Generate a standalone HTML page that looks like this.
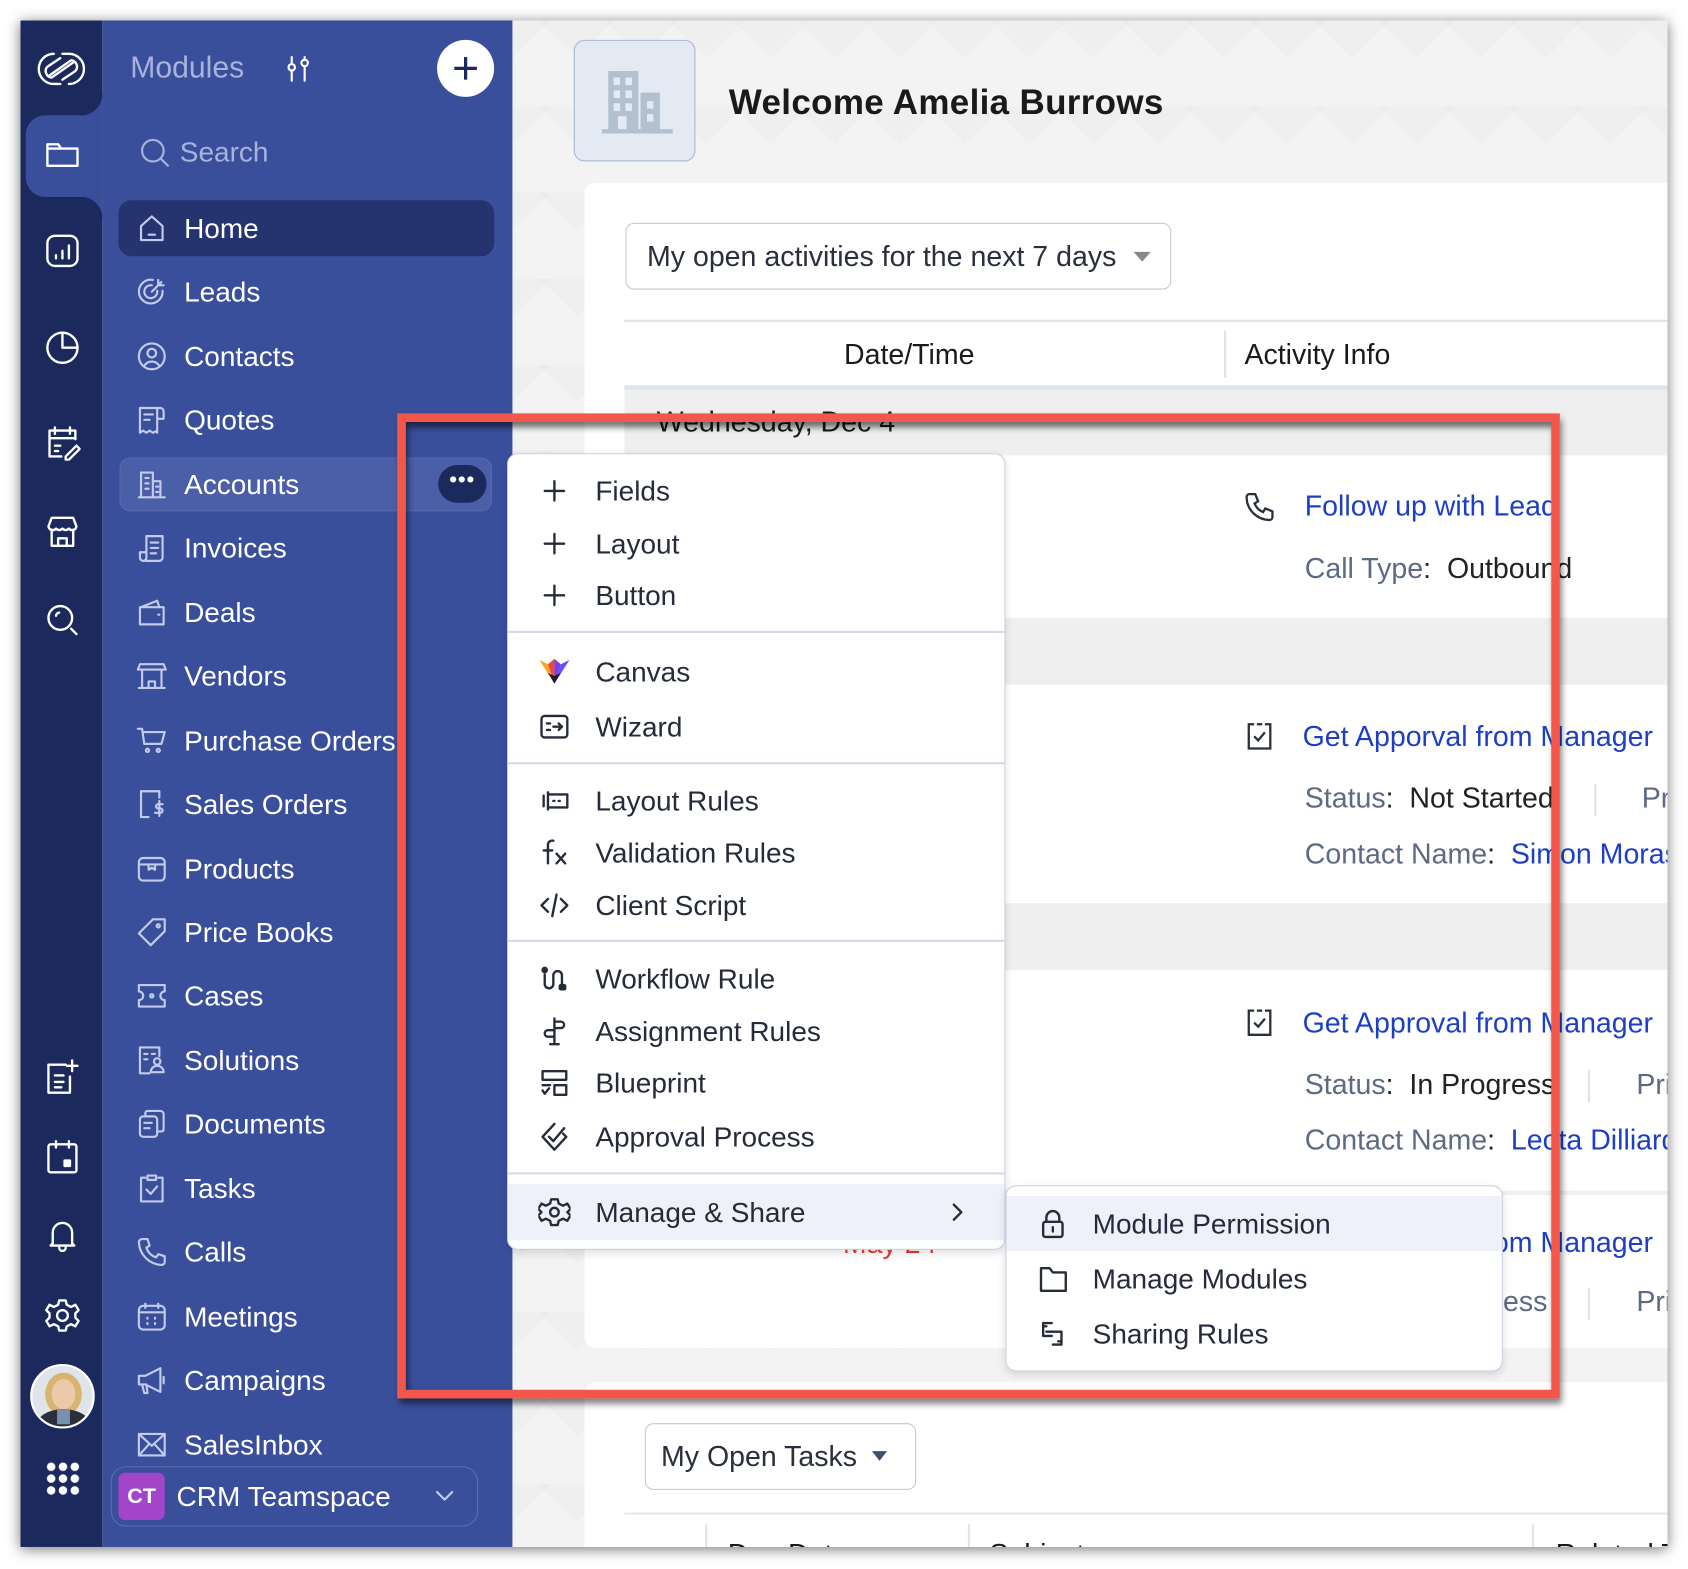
<!DOCTYPE html>
<html><head><meta charset="utf-8"><style>
*{margin:0;padding:0;box-sizing:border-box}
html,body{width:1688px;height:1568px;overflow:hidden;background:#fff;font-family:"Liberation Sans",sans-serif}
#w{position:absolute;left:0;top:0;width:1568px;height:1457px;transform:scale(1.07653);transform-origin:0 0}
.a{position:absolute}
.t{position:absolute;white-space:nowrap;height:32px;line-height:32px}
.side .t{color:#fff;font-size:26px;left:171px}
.side svg{position:absolute;left:126px;width:30px;height:30px;fill:none;stroke:#c3cbeb;stroke-width:2;stroke-linecap:round;stroke-linejoin:round}
.rail svg{position:absolute;left:41px;width:34px;height:34px;fill:none;stroke:#fff;stroke-width:2.2;stroke-linecap:round;stroke-linejoin:round}
.menu .t{left:81px;font-size:26px;color:#262b3b}
.menu svg{position:absolute;left:28px;width:30px;height:30px;fill:none;stroke:#262b3b;stroke-width:2.2;stroke-linecap:round;stroke-linejoin:round}
.sep{position:absolute;left:0;right:0;height:2px;background:#d5d8e6}
.lab{color:#5d6a85}.val{color:#222}.lnk{color:#1d3fc6}
.ct .t{font-size:26.5px}
</style></head><body><div id="w">
<div class="a" style="left:19px;top:19px;width:1530px;height:1418px;box-shadow:0 2px 12px rgba(0,0,0,.55);background:#f3f3f3;overflow:hidden">
 <div class="a ct" style="left:457px;top:0;width:1073px;height:1418px;background:#f3f3f3;
   background-image:linear-gradient(135deg,rgba(0,0,0,.015) 25%,transparent 25%),linear-gradient(225deg,rgba(0,0,0,.015) 25%,transparent 25%);background-size:60px 80px">
  <div class="a" style="left:57px;top:18px;width:113px;height:113px;background:#e4eaf3;border:1.5px solid #a7b8cf;border-radius:10px">
   <svg class="a" style="left:25px;top:22px" width="66" height="66" viewBox="0 0 66 66"><rect x="6" y="6" width="28" height="58" fill="#b3c0cf"/><rect x="36" y="26" width="18" height="38" fill="#b3c0cf"/><rect x="0" y="60" width="66" height="4" fill="#b3c0cf"/><g fill="#e4eaf3"><rect x="11" y="12" width="6" height="7"/><rect x="22" y="12" width="6" height="7"/><rect x="11" y="24" width="6" height="7"/><rect x="22" y="24" width="6" height="7"/><rect x="11" y="36" width="6" height="7"/><rect x="22" y="36" width="6" height="7"/><rect x="15" y="48" width="8" height="12"/><rect x="42" y="34" width="6" height="7"/><rect x="42" y="46" width="6" height="7"/></g></svg>
  </div>
  <div class="t" style="left:201px;top:58px;font-size:32.5px;font-weight:bold;color:#1a1a1a;height:36px;line-height:36px;letter-spacing:.3px">Welcome Amelia Burrows</div>
  <div class="a" style="left:67px;top:151px;width:1020px;height:1082px;background:#fff;border-radius:10px;overflow:hidden">
   <div class="a" style="left:38px;top:37px;width:507px;height:62px;border:1.5px solid #c8c8c8;border-radius:8px"></div>
   <div class="t" style="left:58px;top:52px;color:#2a2f3d">My open activities for the next 7 days</div>
   <div class="a" style="left:510px;top:64px;border-left:8px solid transparent;border-right:8px solid transparent;border-top:9px solid #888"></div>
   <div class="a" style="left:37px;top:127px;width:1000px;height:2px;background:#dde1ea"></div>
   <div class="t" style="left:241px;top:143px;color:#1a1a1a">Date/Time</div>
   <div class="a" style="left:594px;top:137px;width:2px;height:44px;background:#e3e3e3"></div>
   <div class="t" style="left:613px;top:143px;color:#1a1a1a">Activity Info</div>
   <div class="a" style="left:37px;top:188px;width:1000px;height:4px;background:#dde3ee"></div>
   <div class="a" style="left:37px;top:192px;width:1000px;height:61px;background:#efefef"></div>
   <div class="t" style="left:67px;top:206px;color:#1a1a1a">Wednesday, Dec 4</div>
   <div class="a" style="left:37px;top:404px;width:1000px;height:62px;background:#efefef"></div>
   <div class="a" style="left:37px;top:669px;width:1000px;height:62px;background:#efefef"></div>
   <div class="a" style="left:37px;top:936px;width:1000px;height:4px;background:#f0f0f0"></div>
   <svg class="a" style="left:611px;top:285px" width="32" height="32" viewBox="0 0 24 24" fill="none" stroke="#2a2f3d" stroke-width="1.6"><path d="M5 3h4l2 5-2.5 1.5a11 11 0 0 0 6 6L16 13l5 2v4a2 2 0 0 1-2 2A16 16 0 0 1 3 5a2 2 0 0 1 2-2"/></svg>
   <div class="t lnk" style="left:669px;top:284px">Follow up with Lead</div>
   <div class="t" style="left:669px;top:342px"><span class="lab">Call Type</span><span class="val">:&nbsp; Outbound</span></div>
   <svg class="a" style="left:612px;top:499px" width="30" height="30" viewBox="0 0 24 24" fill="none" stroke="#2a2f3d" stroke-width="1.7"><path d="M8 3H4v18h16V3h-4M10 3h4M8 12l3 3 5-6"/></svg>
   <div class="t lnk" style="left:667px;top:498px">Get Apporval from Manager</div>
   <div class="t" style="left:669px;top:555px"><span class="lab">Status</span><span class="val">:&nbsp; Not Started</span></div>
   <div class="a" style="left:938px;top:558px;width:2px;height:30px;background:#e3e3e3"></div>
   <div class="t lab" style="left:982px;top:555px">Pr</div>
   <div class="t" style="left:669px;top:607px"><span class="lab">Contact Name</span><span class="val">:&nbsp; </span><span class="lnk">Simon Morasca</span></div>
   <svg class="a" style="left:612px;top:765px" width="30" height="30" viewBox="0 0 24 24" fill="none" stroke="#2a2f3d" stroke-width="1.7"><path d="M8 3H4v18h16V3h-4M10 3h4M8 12l3 3 5-6"/></svg>
   <div class="t lnk" style="left:667px;top:764px">Get Approval from Manager</div>
   <div class="t" style="left:669px;top:821px"><span class="lab">Status</span><span class="val">:&nbsp; In Progress</span></div>
   <div class="a" style="left:932px;top:824px;width:2px;height:30px;background:#e3e3e3"></div>
   <div class="t lab" style="left:977px;top:821px">Pri</div>
   <div class="t" style="left:669px;top:873px"><span class="lab">Contact Name</span><span class="val">:&nbsp; </span><span class="lnk">Leota Dilliard</span></div>
   <div class="t" style="left:240px;top:969px;color:#e53935">May 24</div>
   <div class="t lnk" style="left:667px;top:968px">Get Approval from Manager</div>
   <div class="t lab" style="left:669px;top:1023px">Status: In Progress</div>
   <div class="a" style="left:932px;top:1026px;width:2px;height:30px;background:#e3e3e3"></div>
   <div class="t lab" style="left:977px;top:1023px">Pri</div>
  </div>
  <div class="a" style="left:67px;top:1265px;width:1020px;height:200px;background:#fff;border-radius:10px;overflow:hidden">
   <div class="a" style="left:56px;top:38px;width:252px;height:62px;border:1.5px solid #c8c8c8;border-radius:8px"></div>
   <div class="t" style="left:71px;top:53px;color:#2a2f3d">My Open Tasks</div>
   <div class="a" style="left:267px;top:64px;border-left:7px solid transparent;border-right:7px solid transparent;border-top:9px solid #3b5068"></div>
   <div class="a" style="left:37px;top:121px;width:1000px;height:2px;background:#e8e8e8"></div>
   <div class="a" style="left:112px;top:132px;width:2px;height:30px;background:#e3e3e3"></div>
   <div class="a" style="left:356px;top:132px;width:2px;height:30px;background:#e3e3e3"></div>
   <div class="a" style="left:880px;top:132px;width:2px;height:30px;background:#e3e3e3"></div>
   <div class="t" style="left:133px;top:144px;color:#1a1a1a">Due Date</div>
   <div class="t" style="left:376px;top:144px;color:#1a1a1a">Subject</div>
   <div class="t" style="left:902px;top:144px;color:#1a1a1a">Related To</div>
  </div>
 </div>
 <div class="a side" style="left:76px;top:0;width:381px;height:1418px;background:#3a4f9c"></div>
 <div class="a rail" style="left:0;top:0;width:76px;height:1418px;background:#1c295d">
  <div class="a" style="left:5px;top:88px;width:71px;height:76px;background:#3a4f9c;border-radius:18px 0 0 18px"></div>
  <div class="a" style="left:56px;top:68px;width:20px;height:20px;background:radial-gradient(circle at 0 0,#1c295d 20px,#3a4f9c 20.5px)"></div>
  <div class="a" style="left:56px;top:164px;width:20px;height:20px;background:radial-gradient(circle at 0 100%,#1c295d 20px,#3a4f9c 20.5px)"></div>
 </div>
</div>

<div class="rail">
 <svg style="top:44px;left:28px;width:58px;height:40px" viewBox="0 0 58 40"><path d="M22 6a14 14 0 1 0 0 28h6" /><path d="M36 34a14 14 0 1 0 0-28h-6"/><path d="M18 26l20-14a6 6 0 0 1 4 10L30 30M40 14L20 28a6 6 0 0 1-4-10l12-8"/></svg>
 <svg style="top:126px" viewBox="0 0 34 34"><path d="M3 8h10l3 4h15v16H3z M3 12h28"/></svg>
 <svg style="top:216px" viewBox="0 0 34 34"><rect x="3" y="3" width="28" height="28" rx="7"/><path d="M11 24v-3M17 24v-7M23 24v-12"/></svg>
 <svg style="top:306px" viewBox="0 0 34 34"><circle cx="17" cy="17" r="14"/><path d="M17 3v14h14"/></svg>
 <svg style="top:394px" viewBox="0 0 34 34"><path d="M16 30H5V6h24v8M5 13h24M10 3v6M24 3v6M10 20h5M10 25h3M20 30l10-10 3 3-10 10h-3z"/></svg>
 <svg style="top:477px" viewBox="0 0 34 34"><path d="M4 12l3-8h20l3 8a4 4 0 0 1-7 2 4 4 0 0 1-6 0 4 4 0 0 1-6 0 4 4 0 0 1-7-2zM7 15v15h20V15M13 30v-7h8v7"/></svg>
 <svg style="top:559px" viewBox="0 0 34 34"><circle cx="15" cy="15" r="11"/><path d="M11 13a4 4 0 0 1 3-3M25 25l5 5"/></svg>
 <svg style="top:983px" viewBox="0 0 34 34"><path d="M20 6H4v26h20V17M10 16h8M10 22h8M10 27h6M26 2v10M21 7h10"/></svg>
 <svg style="top:1058px" viewBox="0 0 34 34"><rect x="4" y="5" width="26" height="26" rx="2"/><path d="M11 2v6M23 2v6"/><rect x="19" y="20" width="5" height="5" fill="#fff"/></svg>
 <svg style="top:1131px" viewBox="0 0 34 34"><path d="M8 24V14a9 9 0 0 1 18 0v10l2 2H6zM14 28a3 3 0 0 0 6 0"/></svg>
 <svg style="top:1205px" viewBox="0 0 34 34"><circle cx="17" cy="17" r="5"/><path d="M14 3h6l1 4 4 2 4-2 3 5-3 3v4l3 3-3 5-4-2-4 2-1 4h-6l-1-4-4-2-4 2-3-5 3-3v-4l-3-3 3-5 4 2 4-2z"/></svg>
</div>
<div class="a" style="left:28px;top:1267px;width:60px;height:60px;border-radius:50%;border:2px solid #fff;overflow:hidden;background:#dfe3ea">
 <div class="a" style="left:12px;top:6px;width:34px;height:40px;border-radius:50%;background:#d8b56e"></div>
 <div class="a" style="left:18px;top:12px;width:22px;height:28px;border-radius:50%;background:#ecc9a9"></div>
 <div class="a" style="left:4px;top:40px;width:50px;height:30px;border-radius:50% 50% 0 0;background:#2b2f3a"></div>
 <div class="a" style="left:23px;top:40px;width:12px;height:14px;background:#7a8fb0"></div>
</div>
<div class="a" style="left:42px;top:1357px;width:32px;height:32px;background:radial-gradient(circle,#fff 3.6px,transparent 4.2px);background-size:11px 11px"></div>

<div class="side">
 <div class="t" style="left:121px;top:47px;color:#a8b2da;font-size:28px">Modules</div>
 <svg style="left:262px;top:49px;stroke:#fff" viewBox="0 0 30 30"><path d="M9 4v6M9 17v9M21 4v2M21 13v13"/><circle cx="9" cy="13.5" r="3"/><circle cx="21" cy="9.5" r="3"/></svg>
 <div class="a" style="left:406px;top:37px;width:53px;height:53px;border-radius:50%;background:#fff"></div>
 <div class="a" style="left:422px;top:62px;width:21px;height:3px;background:#1c295d"></div>
 <div class="a" style="left:431px;top:53px;width:3px;height:21px;background:#1c295d"></div>
 <svg style="left:129px;top:127px;stroke:#a8b2da" viewBox="0 0 30 30"><circle cx="13" cy="13" r="10"/><path d="M20 20l7 7"/></svg>
 <div class="t" style="left:167px;top:125px;color:#a8b2da;font-size:26px">Search</div>
 <div class="a" style="left:110px;top:186px;width:349px;height:52px;background:#25346e;border-radius:12px"></div>
 <div class="a" style="left:111px;top:425px;width:346px;height:50px;background:#4a5fa8;border-radius:10px;border:1px solid #5569b0"></div>
 <div class="a" style="left:407px;top:432px;width:45px;height:35px;background:#1c295d;border-radius:18px;color:#fff;font-size:20px;text-align:center;line-height:28px;font-weight:bold;letter-spacing:1px">•••</div>

 <svg style="top:197px" viewBox="0 0 30 30"><path d="M5 13L15 4l10 9v13H5zM12 21h6"/></svg><div class="t" style="top:196px">Home</div>
 <svg style="top:256px" viewBox="0 0 30 30"><path d="M25 14A11 11 0 1 1 16 4"/><path d="M20 14a6 6 0 1 1-5-5M15 15l9-9M21 4v5h5"/></svg><div class="t" style="top:255px">Leads</div>
 <svg style="top:316px" viewBox="0 0 30 30"><circle cx="15" cy="15" r="12"/><circle cx="15" cy="12" r="4"/><path d="M8 24a8 8 0 0 1 14 0"/></svg><div class="t" style="top:315px">Contacts</div>
 <svg style="top:375px" viewBox="0 0 30 30"><path d="M20 27V4H4v23l3-2 3 2 3-2 3 2 4-2M20 4h3a3 3 0 0 1 3 3v7h-6M8 10h8M8 15h5"/></svg><div class="t" style="top:374px">Quotes</div>
 <svg style="top:435px" viewBox="0 0 30 30"><path d="M3 27h24M5 27V4h11v23M16 12h7v15M9 9h3M9 14h3M9 19h3M19 17h2M19 22h2"/></svg><div class="t" style="top:434px">Accounts</div>
 <svg style="top:494px" viewBox="0 0 30 30"><path d="M9 27h13a3 3 0 0 0 3-3V4H10v20a3 3 0 0 1-6 0v-5h5M14 10h7M14 15h7M14 20h5"/></svg><div class="t" style="top:493px">Invoices</div>
 <svg style="top:554px" viewBox="0 0 30 30"><path d="M5 10l15-6 2 6M4 10h22v16H4zM21 17h1"/></svg><div class="t" style="top:553px">Deals</div>
 <svg style="top:613px" viewBox="0 0 30 30"><path d="M4 4h22l2 5H2zM6 9v17h18V9M3 26h24M12 26v-6h6v6"/></svg><div class="t" style="top:612px">Vendors</div>
 <svg style="top:673px" viewBox="0 0 30 30"><path d="M2 4h4l2 14h16l3-11H7"/><circle cx="11" cy="24" r="1.5"/><circle cx="21" cy="24" r="1.5"/></svg><div class="t" style="top:672px">Purchase Orders</div>
 <svg style="top:732px" viewBox="0 0 30 30"><path d="M12 27H5V3h17v6M22 12v14M25 15h-4a2 2 0 0 0 0 4h2a2 2 0 0 1 0 4h-5"/></svg><div class="t" style="top:731px">Sales Orders</div>
 <svg style="top:792px" viewBox="0 0 30 30"><rect x="3" y="5" width="24" height="21" rx="4"/><path d="M3 11h24M12 11v5l3-2 3 2v-5"/></svg><div class="t" style="top:791px">Products</div>
 <svg style="top:851px" viewBox="0 0 30 30"><path d="M16 3h11v11L14 27 3 16z"/><circle cx="21" cy="9" r="1.5"/></svg><div class="t" style="top:850px">Price Books</div>
 <svg style="top:910px" viewBox="0 0 30 30"><path d="M3 5h24v6a4 4 0 0 0 0 8v6H3v-6a4 4 0 0 0 0-8z"/><circle cx="15" cy="15" r="1.5"/></svg><div class="t" style="top:909px">Cases</div>
 <svg style="top:970px" viewBox="0 0 30 30"><path d="M13 27H4V3h18v8M8 9h3M8 14h3M15 9h3"/><circle cx="20" cy="16" r="3"/><path d="M14 26a6 6 0 0 1 12 0z"/></svg><div class="t" style="top:969px">Solutions</div>
 <svg style="top:1029px" viewBox="0 0 30 30"><rect x="4" y="8" width="16" height="19" rx="3"/><path d="M9 8V5a2 2 0 0 1 2-2h12a3 3 0 0 1 3 3v14a2 2 0 0 1-2 2h-4M8 14h7M8 19h5"/></svg><div class="t" style="top:1028px">Documents</div>
 <svg style="top:1089px" viewBox="0 0 30 30"><path d="M9 5H5v22h20V5h-4M11 3h8v4h-8zM10 16l4 4 6-7"/></svg><div class="t" style="top:1088px">Tasks</div>
 <svg style="top:1148px" viewBox="0 0 30 30"><path d="M6 3h5l2 6-3 2a14 14 0 0 0 9 9l2-3 6 2v5a3 3 0 0 1-3 3A22 22 0 0 1 3 6a3 3 0 0 1 3-3"/></svg><div class="t" style="top:1147px">Calls</div>
 <svg style="top:1208px" viewBox="0 0 30 30"><rect x="3" y="5" width="24" height="22" rx="4"/><path d="M3 11h24M9 3v4M21 3v4M11 16v1M18 16v1M11 21v1M18 21v1"/></svg><div class="t" style="top:1207px">Meetings</div>
 <svg style="top:1267px" viewBox="0 0 30 30"><path d="M3 11h6l14-7v22L9 19H3zM6 19l2 8h3l-1-8M26 12v6"/></svg><div class="t" style="top:1266px">Campaigns</div>
 <svg style="top:1327px" viewBox="0 0 30 30"><rect x="3" y="5" width="24" height="20" rx="1"/><path d="M3 5l12 11L27 5M3 25l9-10M27 25l-9-10"/></svg><div class="t" style="top:1326px">SalesInbox</div>
 <div class="a" style="left:103px;top:1362px;width:341px;height:56px;border:1.5px solid #5a6cb0;border-radius:14px;background:#3a4f9c"></div>
 <div class="a" style="left:110px;top:1368px;width:43px;height:44px;background:#a345c9;border-radius:6px;color:#fff;font-weight:bold;font-size:20px;text-align:center;line-height:44px">CT</div>
 <div class="t" style="left:164px;top:1374px">CRM Teamspace</div>
 <svg style="left:401px;top:1377px;width:24px;height:24px" viewBox="0 0 24 24"><path d="M5 9l7 7 7-7"/></svg>
</div>

<div class="a" style="left:369px;top:384px;width:1080px;height:915px;border:8px solid #f5564a;box-shadow:2px 5px 6px rgba(0,0,0,.5),inset 2px 5px 6px rgba(0,0,0,.55)"></div>

<div class="a menu" style="left:471px;top:421px;width:463px;height:740px;background:#fff;border:1.5px solid #cdd1e2;border-radius:10px;box-shadow:0 3px 8px rgba(0,0,0,.12);overflow:hidden">
 <svg style="top:19px" viewBox="0 0 30 30"><path d="M15 6v18M6 15h18"/></svg><div class="t" style="top:18px">Fields</div>
 <svg style="top:68px" viewBox="0 0 30 30"><path d="M15 6v18M6 15h18"/></svg><div class="t" style="top:67px">Layout</div>
 <svg style="top:116px" viewBox="0 0 30 30"><path d="M15 6v18M6 15h18"/></svg><div class="t" style="top:115px">Button</div>
 <div class="sep" style="top:164px"></div>
 <svg style="top:187px;stroke:none" viewBox="0 0 30 30"><path d="M1 4l8 4 6 18z" fill="#f5a623"/><path d="M9 8l6-5 0 23z" fill="#e94b3c"/><path d="M15 3l6 5-6 18z" fill="#7b3fe4"/><path d="M21 8l8-4-14 22z" fill="#6c4bff"/><path d="M9 16l6 10 6-10-6 3z" fill="#1e1e2e"/></svg><div class="t" style="top:186px">Canvas</div>
 <svg style="top:238px" viewBox="0 0 30 30"><rect x="3" y="5" width="24" height="20" rx="3"/><path d="M8 12h3M8 18h3M14 15h8M19 12l3 3-3 3"/></svg><div class="t" style="top:237px">Wizard</div>
 <div class="sep" style="top:286px"></div>
 <svg style="top:307px" viewBox="0 0 30 30"><path d="M5 10v10M9 7v16M9 9h18v12H9M14 15h1M19 15h1"/></svg><div class="t" style="top:306px">Layout Rules</div>
 <svg style="top:355px" viewBox="0 0 30 30"><path d="M14 4a4 4 0 0 0-5 3v18M5 13h8M17 16l8 9M25 16l-8 9"/></svg><div class="t" style="top:354px">Validation Rules</div>
 <svg style="top:404px" viewBox="0 0 30 30"><path d="M9 9l-6 6 6 6M21 9l6 6-6 6M17 5l-4 20"/></svg><div class="t" style="top:403px">Client Script</div>
 <div class="sep" style="top:451px"></div>
 <svg style="top:472px" viewBox="0 0 30 30"><circle cx="6" cy="7" r="2" fill="#262b3b"/><path d="M6 11v9a4 4 0 0 0 8 0v-8a4 4 0 0 1 8 0v9"/><rect x="20" y="21" width="5" height="4" rx="1" fill="#262b3b"/></svg><div class="t" style="top:471px">Workflow Rule</div>
 <svg style="top:521px" viewBox="0 0 30 30"><path d="M15 3v24M11 27h8M15 6h6a3 3 0 0 1 0 6h-6M15 14H9a3 3 0 0 0 0 6h6"/></svg><div class="t" style="top:520px">Assignment Rules</div>
 <svg style="top:569px" viewBox="0 0 30 30"><path d="M4 4h22v8H4zM15 17h11v9H15zM4 17h7M4 22l2 3 4-5"/></svg><div class="t" style="top:568px">Blueprint</div>
 <svg style="top:619px" viewBox="0 0 30 30"><path d="M15 3l-11 12 11 12 11-12-3-3M10 15l4 4 10-12"/></svg><div class="t" style="top:618px">Approval Process</div>
 <div class="sep" style="top:667px"></div>
 <div class="a" style="left:0;top:678px;width:463px;height:52px;background:#eef0fa"></div>
 <svg style="top:689px" viewBox="0 0 30 30"><circle cx="15" cy="15" r="4"/><path d="M12 3h6l1 4 4 2 4-2 3 5-3 3v0l3 3-3 5-4-2-4 2-1 4h-6l-1-4-4-2-4 2-3-5 3-3-3-3 3-5 4 2 4-2z"/></svg><div class="t" style="top:688px">Manage &amp; Share</div>
 <svg style="left:405px;top:692px;width:24px;height:24px" viewBox="0 0 24 24"><path d="M9 5l7 7-7 7"/></svg>
</div>

<div class="a menu" style="left:934px;top:1101px;width:462px;height:173px;background:#fff;border:1.5px solid #cdd1e2;border-radius:10px;box-shadow:0 3px 8px rgba(0,0,0,.12);overflow:hidden">
 <div class="a" style="left:0;top:9px;width:462px;height:51px;background:#eef0fa"></div>
 <svg style="left:28px;top:20px" viewBox="0 0 30 30"><rect x="6" y="13" width="18" height="14" rx="2"/><path d="M9 13V9a6 6 0 0 1 12 0v4M15 18v4"/></svg><div class="t" style="left:80px;top:19px">Module Permission</div>
 <svg style="left:28px;top:71px" viewBox="0 0 30 30"><path d="M4 5h8l3 4h12v17H4z"/></svg><div class="t" style="left:80px;top:70px">Manage Modules</div>
 <svg style="left:28px;top:122px" viewBox="0 0 30 30"><path d="M14 5H6v12h8M9 13h14v12h-8M6 8h3M20 22h3"/></svg><div class="t" style="left:80px;top:121px">Sharing Rules</div>
</div>
</div></body></html>
